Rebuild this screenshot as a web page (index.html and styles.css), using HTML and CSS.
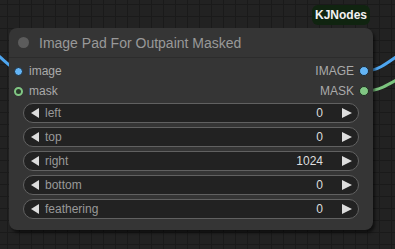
FILE: index.html
```html
<!DOCTYPE html>
<html lang="en">
<head>
    <meta charset="UTF-8">
    <meta name="viewport" content="width=device-width, initial-scale=1.0">
    <title>Image Pad For Outpaint Masked</title>
    <link rel="stylesheet" href="styles.css">
</head>
<body>
<div class="canvas">
    <svg class="links" width="395" height="249" viewBox="0 0 395 249">
        <path d="M-30 40 C 0 50, 5 66, 19 71" stroke="#4ea6f0" stroke-width="3" fill="none"/>
        <path d="M365 71 C 380 71, 388 62, 420 40" stroke="#4ea6f0" stroke-width="3" fill="none"/>
        <path d="M365 91 C 382 91, 392 82, 420 66" stroke="#7cc47f" stroke-width="3" fill="none"/>
    </svg>

    <div class="badge">KJNodes</div>

    <div class="node">
        <div class="node-title">
            <span class="title-dot"></span>
            <span>Image Pad For Outpaint Masked</span>
        </div>
        <div class="slots">
            <div class="slot-row">
                <div class="slot in"><span class="dot blue"></span>image</div>
                <div class="slot out">IMAGE<span class="dot blue"></span></div>
            </div>
            <div class="slot-row">
                <div class="slot in"><span class="dot green hollow"></span>mask</div>
                <div class="slot out">MASK<span class="dot green"></span></div>
            </div>
        </div>
        <div class="widgets">
            <div class="widget"><span class="arrow left"></span><span class="name">left</span><span class="value">0</span><span class="arrow right"></span></div>
            <div class="widget"><span class="arrow left"></span><span class="name">top</span><span class="value">0</span><span class="arrow right"></span></div>
            <div class="widget"><span class="arrow left"></span><span class="name">right</span><span class="value">1024</span><span class="arrow right"></span></div>
            <div class="widget"><span class="arrow left"></span><span class="name">bottom</span><span class="value">0</span><span class="arrow right"></span></div>
            <div class="widget"><span class="arrow left"></span><span class="name">feathering</span><span class="value">0</span><span class="arrow right"></span></div>
        </div>
    </div>
</div>
</body>
</html>
```

FILE: styles.css
```css
body {
  margin: 0;
  font-family: "Liberation Sans", Arial, sans-serif;
}
.canvas {
  position: relative;
  width: 395px;
  height: 249px;
  overflow: hidden;
  background-color: #222;
  background-image:
    linear-gradient(to right, #1a1a1a 1px, transparent 1px),
    linear-gradient(to bottom, #1a1a1a 1px, transparent 1px);
  background-size: 12px 12px;
  background-position: 7px 4px;
}
.links {
  position: absolute;
  left: 0;
  top: 0;
}
.badge {
  position: absolute;
  left: 312px;
  top: 5px;
  width: 58px;
  height: 20px;
  border-radius: 6px;
  background: #102410;
  color: #f2f2f2;
  font-weight: bold;
  font-size: 12px;
  line-height: 20px;
  text-align: center;
}
.node {
  position: absolute;
  left: 9px;
  top: 28px;
  width: 364px;
  height: 202px;
  box-sizing: border-box;
  background: #353535;
  border-radius: 8px;
  box-shadow: 2px 3px 3px rgba(0, 0, 0, 0.55);
}
.node-title {
  height: 29px;
  display: flex;
  align-items: center;
  gap: 10px;
  padding-left: 9px;
  color: #999;
  font-size: 14px;
  border-bottom: 1px solid #2c2c2c;
}
.title-dot {
  width: 11px;
  height: 11px;
  border-radius: 50%;
  background: #5c5c5c;
}
.slots {
  padding-top: 3px;
}
.slot-row {
  height: 20px;
  display: flex;
  justify-content: space-between;
  align-items: center;
  font-size: 12px;
  color: #aaa;
}
.slot {
  display: flex;
  align-items: center;
}
.slot.in {
  padding-left: 5px;
  gap: 6px;
}
.slot.out {
  padding-right: 4px;
  gap: 5px;
}
.dot {
  width: 9px;
  height: 9px;
  border-radius: 50%;
  box-sizing: border-box;
}
.dot.blue {
  background: #64b5f6;
  border: 1px solid #1c2a36;
}
.dot.green {
  background: #81c784;
  border: 1px solid #1e2e1f;
}
.dot.green.hollow {
  background: #2b3a2c;
  border: 2px solid #81c784;
}
.slot.out .dot {
  width: 10px;
  height: 10px;
}
.widgets {
  display: flex;
  flex-direction: column;
  gap: 4px;
  padding: 2px 14px 0;
}
.widget {
  height: 20px;
  box-sizing: border-box;
  border: 1px solid #616161;
  border-radius: 10px;
  background: #222;
  display: flex;
  align-items: center;
  font-size: 12px;
  padding: 0 6px 0 7px;
}
.arrow {
  width: 0;
  height: 0;
  border-top: 5px solid transparent;
  border-bottom: 5px solid transparent;
}
.arrow.left {
  border-right: 8px solid #ddd;
}
.arrow.right {
  border-left: 10px solid #ddd;
}
.name {
  color: #999;
  margin-left: 6px;
  flex: 1;
}
.value {
  color: #ddd;
  margin-right: 19px;
}
```
